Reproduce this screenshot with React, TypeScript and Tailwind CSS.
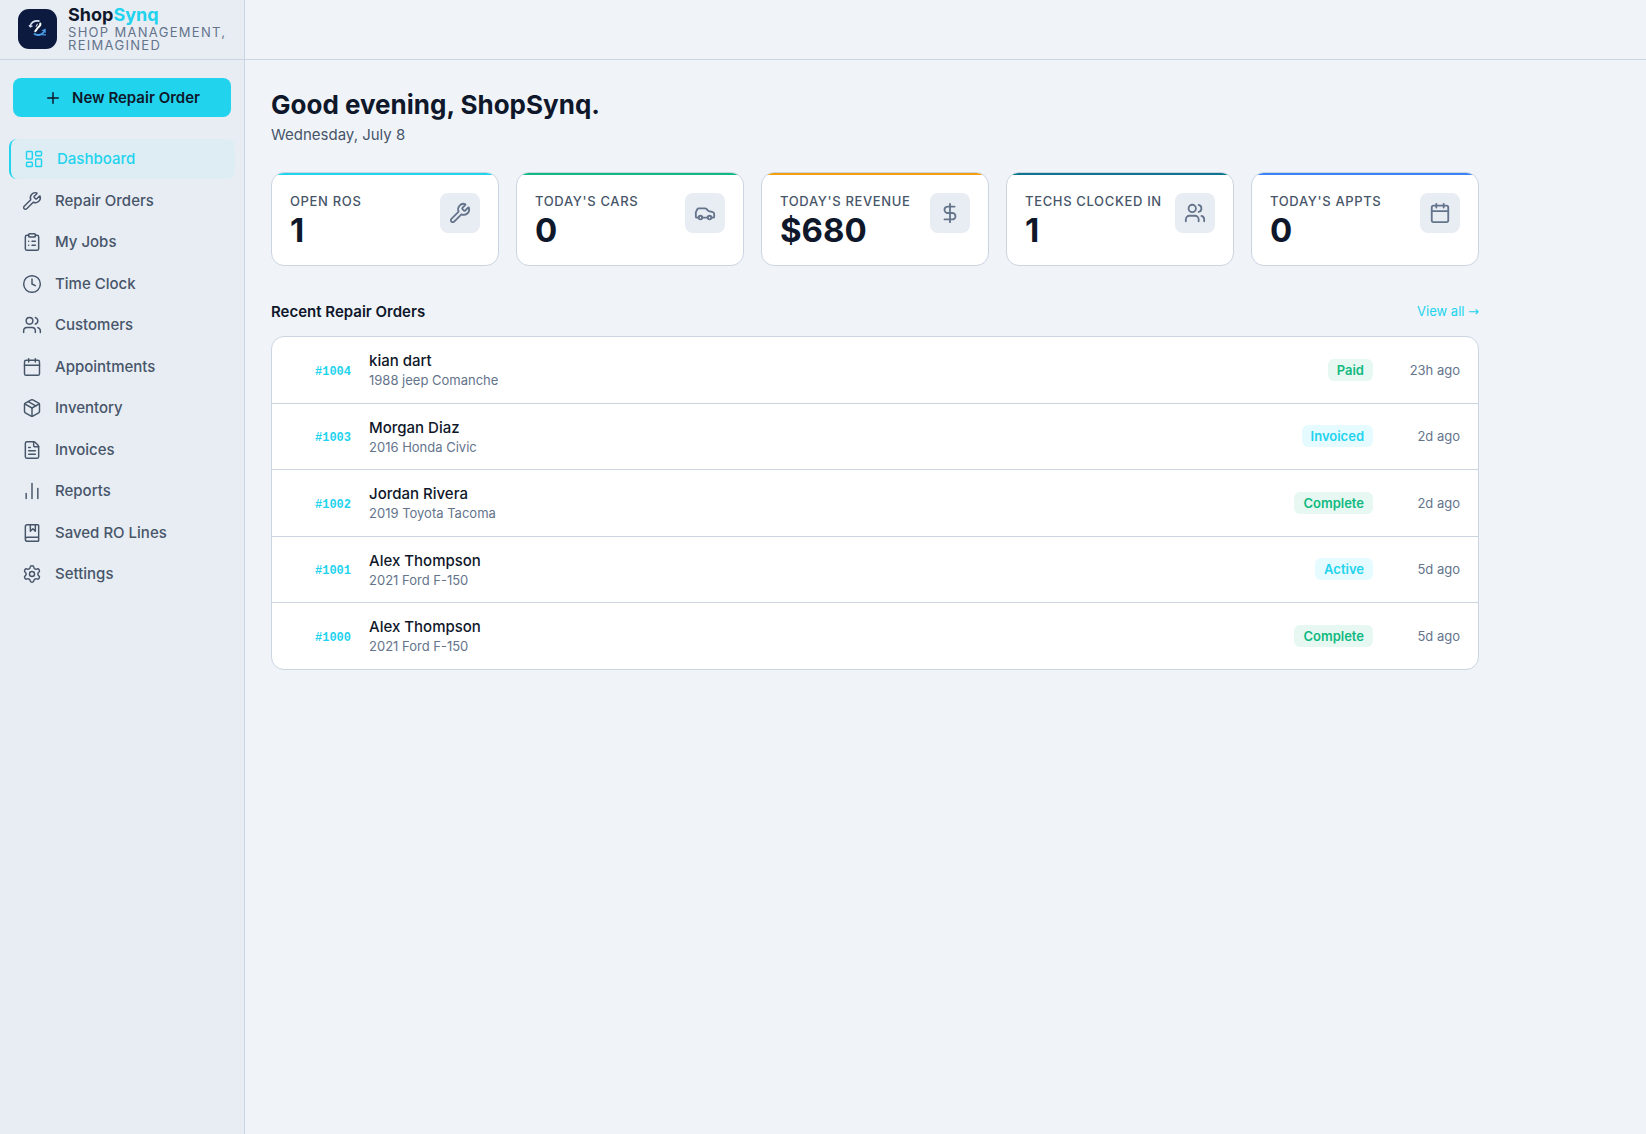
import {
  BookMarked,
  Calendar,
  Car,
  ChartNoAxesColumn,
  ClipboardList,
  Clock,
  DollarSign,
  FileText,
  LayoutDashboard,
  Package,
  Plus,
  Settings,
  Users,
  Wrench,
  type LucideIcon,
} from 'lucide-react';
import clsx from 'clsx';

interface NavItem {
  label: string;
  icon: LucideIcon;
  active?: boolean;
}

const NAV_ITEMS: NavItem[] = [
  { label: 'Dashboard', icon: LayoutDashboard, active: true },
  { label: 'Repair Orders', icon: Wrench },
  { label: 'My Jobs', icon: ClipboardList },
  { label: 'Time Clock', icon: Clock },
  { label: 'Customers', icon: Users },
  { label: 'Appointments', icon: Calendar },
  { label: 'Inventory', icon: Package },
  { label: 'Invoices', icon: FileText },
  { label: 'Reports', icon: ChartNoAxesColumn },
  { label: 'Saved RO Lines', icon: BookMarked },
  { label: 'Settings', icon: Settings },
];

interface Stat {
  label: string;
  value: string;
  icon: LucideIcon;
  bar: string;
}

const STATS: Stat[] = [
  { label: 'Open ROs', value: '1', icon: Wrench, bar: 'bg-[#22d3ee]' },
  { label: "Today's Cars", value: '0', icon: Car, bar: 'bg-[#10b981]' },
  { label: "Today's Revenue", value: '$680', icon: DollarSign, bar: 'bg-[#f59e0b]' },
  { label: 'Techs Clocked In', value: '1', icon: Users, bar: 'bg-[#0e7490]' },
  { label: "Today's Appts", value: '0', icon: Calendar, bar: 'bg-[#3b82f6]' },
];

type Status = 'Paid' | 'Invoiced' | 'Complete' | 'Active';

const STATUS_STYLES: Record<Status, string> = {
  Paid: 'bg-[#e7f8f2] text-[#10b981]',
  Complete: 'bg-[#e7f8f2] text-[#10b981]',
  Invoiced: 'bg-[#e6fbff] text-[#22d3ee]',
  Active: 'bg-[#e6fbff] text-[#22d3ee]',
};

interface RepairOrder {
  number: string;
  customer: string;
  vehicle: string;
  status: Status;
  age: string;
}

const ORDERS: RepairOrder[] = [
  { number: '#1004', customer: 'kian dart', vehicle: '1988 jeep Comanche', status: 'Paid', age: '23h ago' },
  { number: '#1003', customer: 'Morgan Diaz', vehicle: '2016 Honda Civic', status: 'Invoiced', age: '2d ago' },
  { number: '#1002', customer: 'Jordan Rivera', vehicle: '2019 Toyota Tacoma', status: 'Complete', age: '2d ago' },
  { number: '#1001', customer: 'Alex Thompson', vehicle: '2021 Ford F-150', status: 'Active', age: '5d ago' },
  { number: '#1000', customer: 'Alex Thompson', vehicle: '2021 Ford F-150', status: 'Complete', age: '5d ago' },
];

function LogoMark() {
  return (
    <svg viewBox="0 0 39 40" className="h-10 w-[39px] shrink-0" fill="none" aria-hidden="true">
      <rect width="39" height="40" rx="11" fill="#0b1a3e" />
      <path d="M12.200 17.500c.3-4 4-6.300 9.300-5.300" stroke="#dbe4f5" strokeWidth="1.800" />
      <path d="M11 16l1.300 2 2.200-1.300" stroke="#dbe4f5" strokeWidth="1.200" />
      <path d="M22.300 14.500c.5 2-.6 2.700-2 3.700s-1.500 2.300-3 4" stroke="#fff" strokeWidth="2" strokeLinecap="round" />
      <path d="M19.500 14.800l-1.500 3" stroke="#fff" strokeWidth="1" />
      <path d="M16 24.500c2.500 2.300 7.500 2 10-1.500" stroke="#4a9be8" strokeWidth="2" />
      <path d="M23.500 21.500l4-2 .3 4.500z" fill="#4a9be8" />
      <path d="M24 25.800h4" stroke="#4a9be8" strokeWidth="1.200" />
    </svg>
  );
}

function Sidebar() {
  return (
    <aside className="flex w-[245px] shrink-0 flex-col border-r border-[#cbd5e1] bg-[#e8edf4]">
      <div className="flex h-15 items-center gap-[11px] border-b border-[#cbd5e1] pr-3 pb-0.5 pl-[18px]">
        <LogoMark />
        <div>
          <p className="text-[18px] leading-[18px] font-bold text-[#0f172a]">
            Shop<span className="text-[#22d3ee]">Synq</span>
          </p>
          <p className="mt-0.5 text-[13px] leading-[13px] tracking-widest text-[#64748b] uppercase">
            Shop Management, Reimagined
          </p>
        </div>
      </div>

      <div className="px-[13px] pt-[18px]">
        <button
          type="button"
          className="flex w-full items-center justify-center gap-2.5 rounded-lg bg-[#22d3ee] pt-[9px] pb-2 text-[15px] leading-[22px] font-semibold text-[#0f172a]"
        >
          <Plus className="h-[18px] w-[18px]" aria-hidden="true" />
          New Repair Order
        </button>
      </div>

      <nav className="mt-[22px] flex flex-col gap-0.5 px-[9px]">
        {NAV_ITEMS.map(({ label, icon: Icon, active }) => (
          <a
            key={label}
            href="#"
            aria-current={active ? 'page' : undefined}
            className={clsx(
              'flex items-center gap-[13px] rounded-lg pt-[9px] pb-2 text-[15px] leading-normal font-medium',
              active
                ? 'border-l-2 border-[#22d3ee] bg-[#ddedf3] pl-[13px] text-[#22d3ee]'
                : 'pl-[13px] text-[#475569]',
            )}
          >
            <Icon className="h-5 w-5 shrink-0" strokeWidth={1.75} aria-hidden="true" />
            {label}
          </a>
        ))}
      </nav>
    </aside>
  );
}

function StatCard({ label, value, icon: Icon, bar }: Stat) {
  return (
    <div className="overflow-hidden rounded-[13px] border border-[#cbd5e1] bg-white">
      <div className={clsx('h-0.5', bar)} />
      <div className="flex items-start justify-between px-[18px] pt-[18px] pb-[17px]">
        <div>
          <p className="text-[13px] leading-4 font-medium tracking-wider whitespace-nowrap text-[#475569] uppercase">
            {label}
          </p>
          <p className="mt-1 text-[33px] leading-[35px] font-bold text-[#0f172a]">{value}</p>
        </div>
        <div className="flex h-10 w-10 shrink-0 items-center justify-center rounded-lg bg-[#e8edf4] text-[#64748b]">
          <Icon className="h-[22px] w-[22px]" aria-hidden="true" />
        </div>
      </div>
    </div>
  );
}

function RecentOrders() {
  return (
    <section className="mt-[34px]">
      <div className="flex items-center justify-between">
        <h2 className="text-[15px] leading-[22px] font-semibold text-[#0f172a]">Recent Repair Orders</h2>
        <a href="#" className="text-[13px] leading-[22px] text-[#22d3ee]">
          View all <span className="font-['DejaVu_Sans',sans-serif]">→</span>
        </a>
      </div>
      <div className="mt-[13px] overflow-hidden rounded-[13px] border border-[#cbd5e1] bg-white">
        <table className="w-full">
          <tbody className="divide-y divide-[#cbd5e1]">
            {ORDERS.map((order) => (
              <tr key={order.number}>
                <td className="w-[79px] pt-1 text-right font-['Liberation_Mono',monospace] text-[12px] font-bold text-[#22d3ee]">
                  {order.number}
                </td>
                <td className="pt-[13px] pb-3 pl-[18px]">
                  <p className="text-[15px] leading-[1.4] font-medium text-[#0f172a]">{order.customer}</p>
                  <p className="text-[13px] leading-normal text-[#64748b]">{order.vehicle}</p>
                </td>
                <td className="text-right text-[13px] leading-[22px]">
                  <span
                    className={clsx('inline-block rounded-md px-[9px] align-top font-semibold', STATUS_STYLES[order.status])}
                  >
                    {order.status}
                  </span>
                </td>
                <td className="w-[105px] pr-[18px] text-right text-[13px] leading-[22px] text-[#64748b]">{order.age}</td>
              </tr>
            ))}
          </tbody>
        </table>
      </div>
    </section>
  );
}

export default function App() {
  return (
    <div className="flex min-h-screen bg-[#f0f4f9] font-[Inter,sans-serif] text-[#0f172a]">
      <Sidebar />
      <div className="flex min-w-0 flex-1 flex-col">
        <header className="h-15 border-b border-[#cbd5e1]" />
        <main className="max-w-[1260px] px-[26px] pt-[26px]">
          <h1 className="text-[26px] leading-[38px] font-bold">Good evening, ShopSynq.</h1>
          <p className="text-[15px] leading-[22px] text-[#475569]">Wednesday, July 8</p>
          <div className="mt-[26px] grid grid-cols-5 gap-[17px]">
            {STATS.map((stat) => (
              <StatCard key={stat.label} {...stat} />
            ))}
          </div>
          <RecentOrders />
        </main>
      </div>
    </div>
  );
}
